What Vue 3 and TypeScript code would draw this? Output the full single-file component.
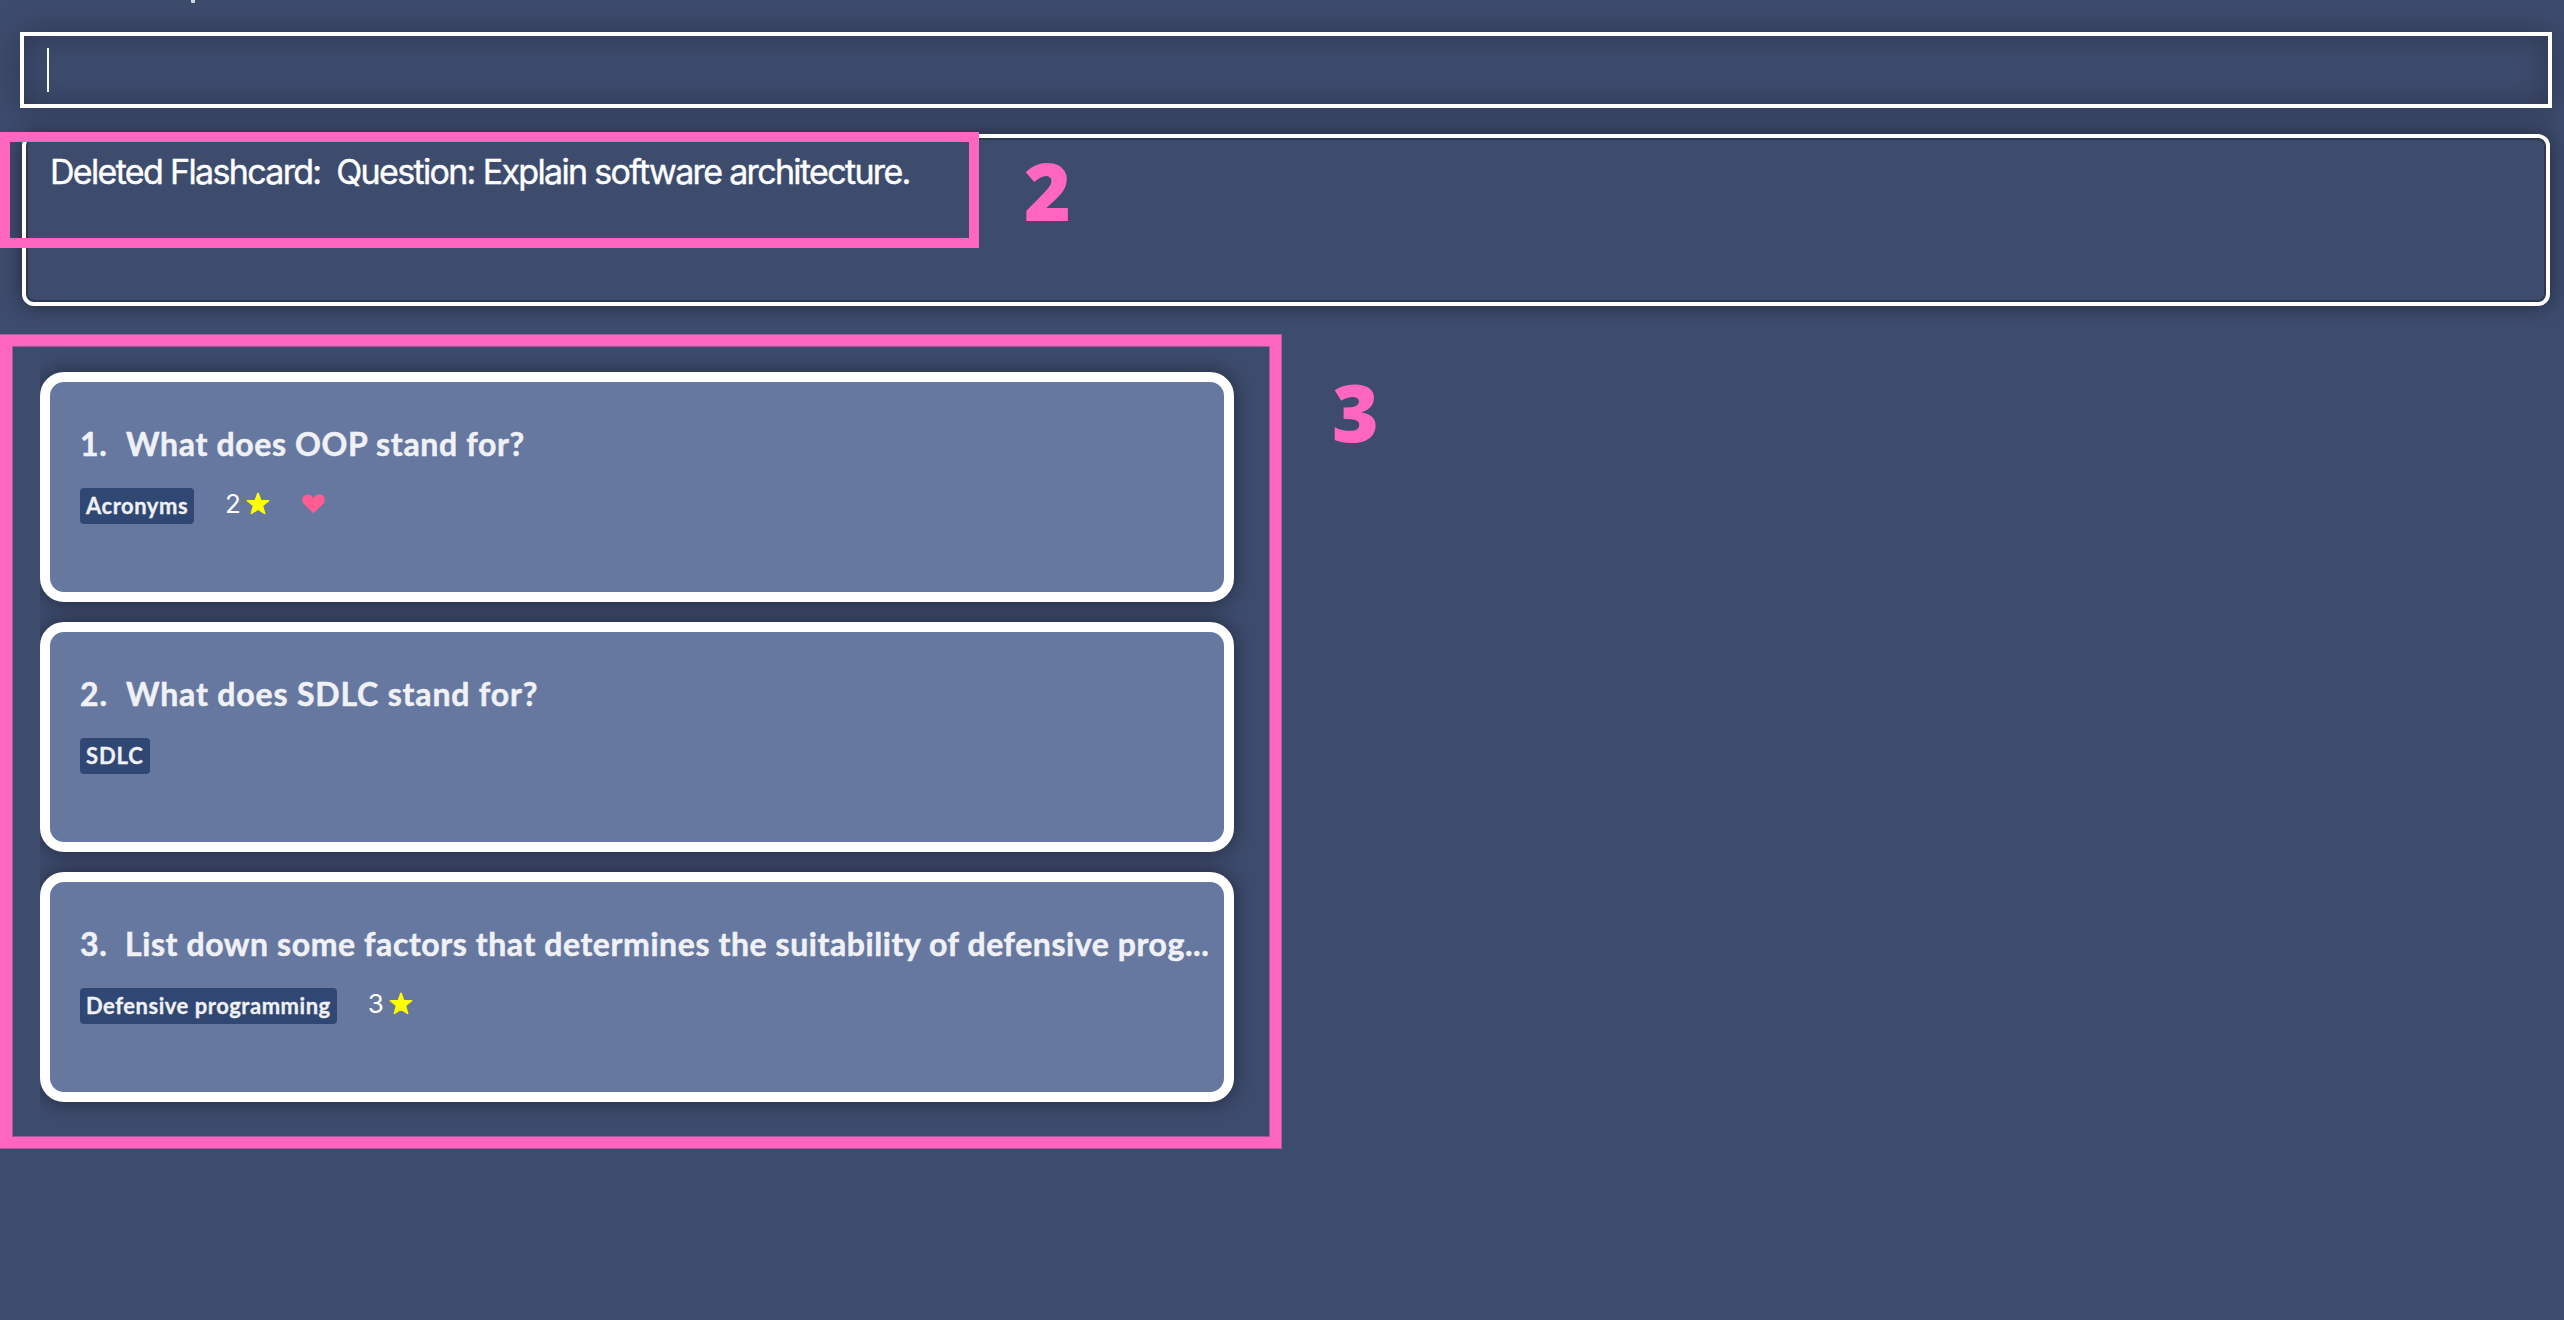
<script setup lang="ts">
interface Card {
  id: number
  question: string
  tag: string
  priority?: number
  favourite?: boolean
}

const cards: Card[] = [
  { id: 1, question: 'What does OOP stand for?', tag: 'Acronyms', priority: 2, favourite: true },
  { id: 2, question: 'What does SDLC stand for?', tag: 'SDLC' },
  { id: 3, question: 'List down some factors that determines the suitability of defensive prog...', tag: 'Defensive programming', priority: 3 },
]
</script>

<template>
  <div class="app">
    <div class="menubar"><i class="descender"></i></div>
    <div class="command"><i class="caret"></i></div>
    <div class="result">Deleted Flashcard:&nbsp; Question: Explain software architecture.</div>
    <div class="list">
      <article v-for="card in cards" :key="card.id" class="card">
        <div class="title"><span class="index">{{ card.id }}.</span><span>{{ card.question }}</span></div>
        <div class="meta">
          <span class="tag">{{ card.tag }}</span>
          <span v-if="card.priority" class="priority">{{ card.priority }}</span>
          <svg v-if="card.priority" class="star" viewBox="0 0 24 23"><path d="M12 1.300 14.700 8.500 22.600 8.700 16.400 13.600 18.600 21.400 12 17.100 5.400 21.400 7.600 13.600 1.400 8.700 9.300 8.500Z" /></svg>
          <svg v-if="card.favourite" class="heart" viewBox="0 0 23 20"><path d="M11.500 19.800C8.500 14.800.2 11.300.2 5.600.2 2.700 2.600.5 5.700.5c2.600 0 4.900 1.400 5.800 3.900C12.400 1.900 14.700.5 17.300.5c3.100 0 5.500 2.200 5.500 5.100 0 5.700-8.300 9.200-11.300 14.200Z" /></svg>
        </div>
      </article>
    </div>
    <div class="mark mark-result"></div>
    <div class="mark mark-list"></div>
    <div class="num num-result">2</div>
    <div class="num num-list">3</div>
  </div>
</template>

<style>
body {
  margin: 0;
  background: #3d4b6d;
}
</style>

<style scoped>
.app {
  position: relative;
  box-sizing: border-box;
  width: 2564px;
  height: 1320px;
  overflow: hidden;
  background: #3d4b6d;
}
.menubar {
  display: flex;
  height: 32px;
  padding-left: 191px;
}
.descender {
  width: 4px;
  height: 3px;
  border-radius: 0 0 1px 1px;
  background: #d3d8e3;
}
.command {
  box-sizing: border-box;
  height: 76px;
  margin: 0 12px 0 20px;
  padding: 12px 23px;
  border: 4px solid #fff;
  box-shadow: 0 0 32px rgba(0, 0, 0, 0.26), inset 0 0 32px rgba(0, 0, 0, 0.26);
}
.caret {
  display: block;
  width: 2px;
  height: 44px;
  background: #fff;
}
.result {
  box-sizing: border-box;
  height: 172px;
  margin: 26px 14px 0 22px;
  padding: 14px 24px;
  border: 4px solid #fff;
  border-radius: 12px;
  box-shadow: 0 0 20px rgba(0, 0, 0, 0.45), inset 0 0 0 2px #2d374f;
  font: 34px/40px Inter, sans-serif;
  letter-spacing: -1.67px;
  color: #fff;
  white-space: nowrap;
  -webkit-text-stroke: 0.4px #fff;
}
.list {
  display: flex;
  flex-direction: column;
  gap: 20px;
  width: 1230px;
  margin: 36px 0 0 40px;
  padding: 30px 0;
  overflow: hidden;
}
.card {
  box-sizing: border-box;
  width: 1194px;
  height: 230px;
  padding: 40px 0 0 30px;
  border: 10px solid #fff;
  border-radius: 24px;
  background: #66789f;
  box-shadow: 0 0 20px rgba(0, 0, 0, 0.45);
}
.title {
  display: flex;
  height: 44px;
  font: 700 32px/44px Lato, sans-serif;
  letter-spacing: 0.65px;
  color: #f0f1f6;
  white-space: nowrap;
  -webkit-text-stroke: 0.5px #f0f1f6;
}
.card:nth-child(2) .title {
  letter-spacing: 0.83px;
}
.card:nth-child(3) .title {
  letter-spacing: 0.58px;
}
.index {
  flex: none;
  width: 46px;
}
.card:nth-child(3) .index {
  width: 45px;
}
.meta {
  display: flex;
  height: 36px;
  margin-top: 22px;
}
.tag {
  box-sizing: border-box;
  height: 36px;
  padding: 0 6px;
  border-radius: 4px;
  background: #304773;
  font: 700 22px/35px Lato, sans-serif;
  letter-spacing: 0.52px;
  color: #f0f1f6;
  -webkit-text-stroke: 0.3px #f0f1f6;
}
.card:nth-child(2) .tag {
  letter-spacing: 0.9px;
}
.priority {
  width: 21px;
  margin-left: 31px;
  font: 26px/32px Inter, sans-serif;
  color: #fff;
}
.star {
  width: 24px;
  height: 23px;
  margin-top: 4px;
  fill: #ff0;
  stroke: #ff0;
  stroke-width: 1.6;
  stroke-linejoin: round;
}
.heart {
  width: 23px;
  height: 20px;
  margin: 6px 0 0 32px;
  fill: #ff5c93;
}
.mark {
  position: absolute;
  box-sizing: border-box;
  left: 0;
  border: 10px solid #ff66c0;
}
.mark-result {
  top: 132px;
  width: 979px;
  height: 116px;
}
.mark-list {
  top: 335px;
  width: 1281px;
  height: 813px;
  border-width: 11px 11px 11px 12px;
  outline: 1px solid rgba(255, 102, 192, 0.6);
  box-shadow: inset 0 0 0 1px rgba(255, 102, 192, 0.5);
}
.num {
  position: absolute;
  font: 800 80px/80px "Open Sans", sans-serif;
  color: #ff66c0;
}
.num-result {
  left: 1024px;
  top: 150px;
}
.num-list {
  left: 1332px;
  top: 371px;
}
</style>
